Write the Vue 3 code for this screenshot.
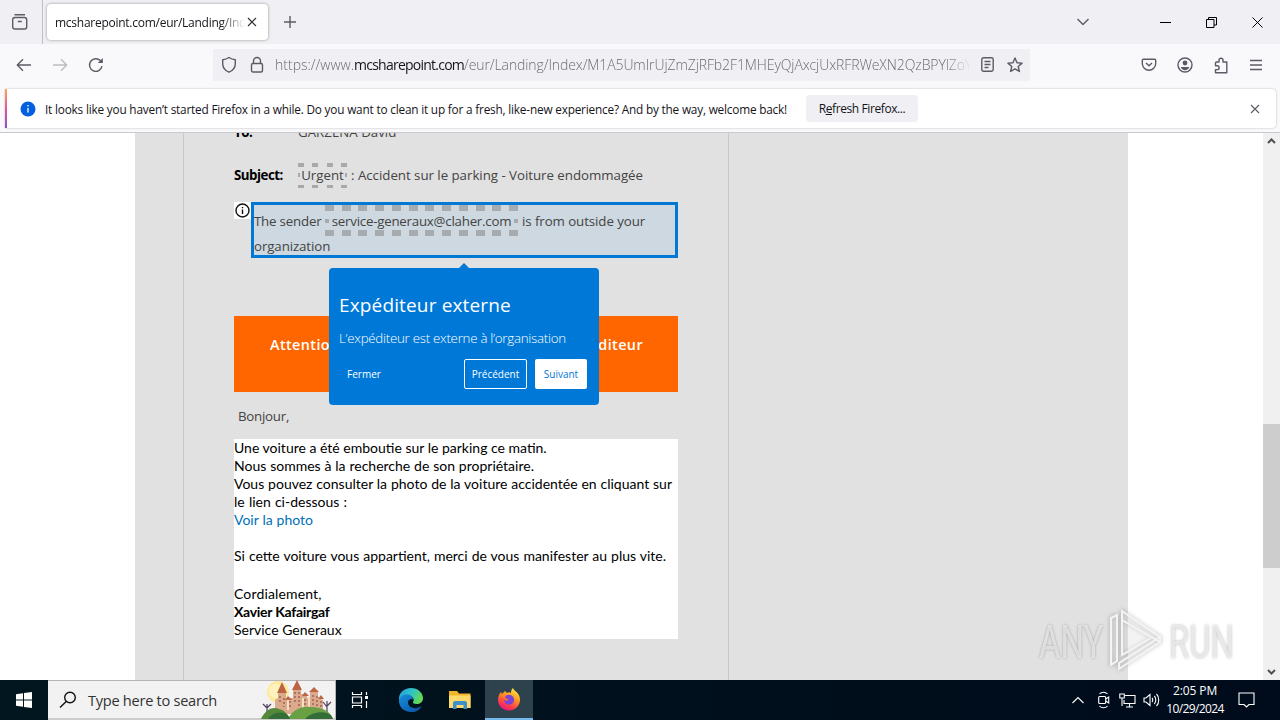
<template>
    <div class="desktop">
        <header class="tabs">
            <div class="overview">
                <svg width="18" height="18" viewBox="0 0 18 18" class="ico"><rect x="1.7" y="4.5" width="14" height="11.5" rx="2.2"/><path d="M3.5 1.7h10.5M6.8 8.5h4"/></svg>
            </div>
            <div class="tab">
                <span class="tab-title">mcsharepoint.com/eur/Landing/Index</span>
                <svg width="10" height="10" viewBox="0 0 10 10" class="ico dark"><path d="M1 1l8 8M9 1l-8 8"/></svg>
            </div>
            <svg class="ico plus" width="14" height="14" viewBox="0 0 14 14"><path d="M7 1v12M1 7h12"/></svg>
            <div class="window-buttons">
                <svg class="ico" width="14" height="8" viewBox="0 0 14 8"><path d="M1.5 1l5.5 5.5L12.5 1"/></svg>
                <svg class="ico black minimize" width="11" height="11" viewBox="0 0 11 11"><path d="M0 5.5h11"/></svg>
                <svg class="ico black" width="11" height="11" viewBox="0 0 11 11"><path d="M.5 2.5h7.5v8H.5zM2.5 2.5v-2h8v7.5H8"/></svg>
                <svg class="ico black" width="11" height="11" viewBox="0 0 11 11"><path d="M.5.5l10 10M10.5.5l-10 10"/></svg>
            </div>
        </header>

        <nav class="toolbar">
            <div class="history">
                <svg class="ico" width="16" height="14" viewBox="0 0 16 14"><path d="M15 7H1.5M7 1.2L1.3 7 7 12.8"/></svg>
                <svg class="ico disabled" width="16" height="14" viewBox="0 0 16 14"><path d="M1 7h13.5M9 1.2L14.7 7 9 12.8"/></svg>
                <svg class="ico" width="16" height="16" viewBox="0 0 16 16"><path d="M14 9.2A6.3 6.3 0 1 1 12.3 3.6L14.2 5.4"/><path d="M14.8 1v5H9.8z" class="solid"/></svg>
            </div>
            <div class="urlbar">
                <svg class="ico" width="16" height="18" viewBox="0 0 16 18"><path d="M8 1.5c2 1.4 4 2 6.3 2.2v4c0 4-2.5 6.8-6.3 8.5C4.2 14.5 1.7 11.7 1.7 7.7v-4C4 3.5 6 2.9 8 1.5z"/></svg>
                <svg class="ico lock" width="14" height="18" viewBox="0 0 14 18"><rect x="1.5" y="7.5" width="11" height="8.5" rx="1.5"/><path d="M3.5 7.5V5a3.5 3.5 0 0 1 7 0v2.5"/></svg>
                <div class="url"><span>https://www.</span><b>mcsharepoint.com</b><span class="path">/eur/Landing/Index/M1A5UmIrUjZmZjRFb2F1MHEyQjAxcjUxRFRWeXN2QzBPYlZoY</span></div>
                <svg class="ico reader" width="13" height="15" viewBox="0 0 13 15"><rect x=".8" y=".8" width="11.4" height="13.4" rx="1.7"/><path d="M3.5 4.5h6M3.5 7.5h6M3.5 10.5h4"/></svg>
                <svg class="ico" width="16" height="16" viewBox="0 0 16 16"><path d="M8 1l2 4.700 5.100.4-3.900 3.400 1.200 5L8 11.800l-4.400 2.700 1.200-5L.9 6.100 6 5.700z"/></svg>
            </div>
            <div class="actions">
                <svg class="ico" width="16" height="16" viewBox="0 0 16 16"><path d="M2.500 2.200h11c.8 0 1.200.5 1.200 1.200V6.500a6.700 6.700 0 0 1-13.400 0V3.400c0-.7.4-1.200 1.200-1.200zM5 6l3 2.800L11 6"/></svg>
                <svg class="ico" width="16" height="16" viewBox="0 0 16 16"><circle cx="8" cy="8" r="7"/><circle cx="8" cy="6" r="2.4" class="solid"/><path d="M3.7 10h8.6c-.6 1.9-2.2 3.2-4.3 3.2S4.3 11.9 3.7 10z" class="solid"/></svg>
                <svg class="ico" width="16" height="17" viewBox="0 0 16 17"><path d="M3.5 5H6V3.2a2 2 0 0 1 4 0V5h3.8v10.8H2.5v-3.2h1.7a1.9 1.9 0 0 0 0-3.8H2.5V6c0-.6.4-1 1-1z"/></svg>
                <svg class="ico" width="14" height="12" viewBox="0 0 14 12"><path d="M1 1.5h12M1 6h12M1 10.5h12"/></svg>
            </div>
        </nav>

        <div class="notice-wrap">
            <div class="notice">
                <svg width="16" height="16" viewBox="0 0 16 16"><circle cx="8" cy="8" r="7.5" fill="#0560df"/><path d="M8 7v4.5M8 4v1.5" stroke="#fff" stroke-width="1.3"/></svg>
                <span class="notice-text">It looks like you haven’t started Firefox in a while. Do you want to clean it up for a fresh, like-new experience? And by the way, welcome back!</span>
                <button class="refresh"><span>R<u>e</u>fresh Firefox...</span></button>
                <svg class="ico notice-close" width="10" height="10" viewBox="0 0 10 10"><path d="M1 1l8 8M9 1l-8 8"/></svg>
            </div>
        </div>

        <main class="viewport">
            <div class="gray">
                <section class="mail">
                    <div class="row to"><b>To:</b><span>GARZENA David</span></div>
                    <div class="row subject"><b>Subject:</b><span class="dashed">Urgent</span><span class="subject-text">: Accident sur le parking - Voiture endommagée</span></div>
                    <div class="sender">
                        <div class="sender-icon"><svg width="15" height="15" viewBox="0 0 15 15"><circle cx="7.5" cy="7.5" r="6.5"/><path d="M7.5 6.5v4.5M7.5 4v1.3"/></svg></div>
                        <div class="sender-box">
                            <div class="sender-line"><span class="s1">The sender</span><span class="address">service-generaux@claher.com</span><span class="s2">is from outside your</span></div>
                            <div class="s3">organization</div>
                        </div>
                        <div class="popover">
                            <h3>Expéditeur externe</h3>
                            <p>L’expéditeur est externe à l’organisation</p>
                            <div class="popover-buttons">
                                <button class="close">Fermer</button>
                                <button class="prev">Précédent</button>
                                <button class="next">Suivant</button>
                            </div>
                        </div>
                    </div>
                    <div class="banner"><span>Attention</span><span>expéditeur</span></div>
                    <div class="hello">Bonjour,</div>
                    <article class="body">
                        <div v-for="(line, i) in lines" :key="i" class="line" :class="line.type"><span :style="{ wordSpacing: (line.words || 0) + 'px' }">{{ line.text }}</span></div>
                    </article>
                </section>
            </div>
            <div class="scrollbar">
                <svg width="17" height="17" viewBox="0 0 17 17"><path d="M5 10l3.5-3.5L12 10"/></svg>
                <div class="thumb"></div>
                <svg width="17" height="17" viewBox="0 0 17 17"><path d="M5 7l3.5 3.5L12 7"/></svg>
            </div>
            <div class="watermark">
                <span>ANY</span>
                <svg width="58" height="66" viewBox="0 0 58 66"><path d="M4 10l6-3v46l-6 4zM15 3l38 26v5L15 12zM15 12v35l29-17M12 61l41-27v-5L12 55z"/></svg>
                <span>RUN</span>
            </div>
        </main>

        <footer class="taskbar">
            <div class="start"><svg width="16" height="16" viewBox="0 0 16 16"><path d="M0 2.3L7 1.3V7.5H0zM8 1.1L16 0v7.5H8zM0 8.5h7v6.2l-7-1zM8 8.5h8V16l-8-1.1z" fill="#fff"/></svg></div>
            <div class="search">
                <svg width="18" height="18" viewBox="0 0 18 18"><circle cx="11" cy="6.5" r="5.3"/><path d="M7.2 10.5L1 16.5"/></svg>
                <span>Type here to search</span>
                <svg class="castle" width="76" height="39" viewBox="0 0 76 39">
                    <circle cx="19" cy="12" r="11" fill="#ffe9a0"/>
                    <circle cx="17" cy="11" r="7" fill="#fff3bd"/>
                    <path d="M16 34V20l3-2v-6h8v6h7V9h8v5h6v4h3v-7h8v6l5 3v14z" fill="#dba98c"/>
                    <path d="M18 13l5-11 5 11zM33 10l5-10 5 10zM50 12l5-5 5 5zM26 20l3-4 4 4zM43 16l3-4 4 4zM59 19l3-4 3 4z" fill="#bd6542"/>
                    <path d="M21 16v8M25 18v9M31 21v8M36 12v12M40 12v14M46 19v8M54 15v13M58 16v11M62 21v6" stroke="#995649" stroke-width="1.3" stroke-dasharray="2 2"/>
                    <path d="M29 20v10M44 18v10M50 17v10" stroke="#f8dfc0" stroke-width="2"/>
                    <path d="M8 34V24M8 28l-4-4M8 28l4-4M68 34V21M68 27l-4-5M68 26l4-4" stroke="#55405f" stroke-width="1.2" fill="none"/>
                    <path d="M2 39c4-8 10-13 18-10 5 1 9 5 11 10z" fill="#54893c"/>
                    <path d="M29 39c4-8 12-13 23-12 12 0 20 5 22 12z" fill="#6aa044"/>
                    <path d="M9 39c2-4 9-8 16-6 3 1 5 3 6 6zM46 39c5-6 15-8 22-6 3 1 5 3 6 6z" fill="#346d37"/>
                </svg>
            </div>
            <div class="app first"><svg class="taskview" width="18" height="16" viewBox="0 0 18 16"><path d="M1.5 0v2.5h9V0M1.5 16v-2.5h9V16M1.5 5h9v6h-9zM15.5 0v3M15.5 9v7"/><path d="M14 4h3v3h-3z" class="knob"/></svg></div>
            <div class="app edge">
                <svg width="26" height="26" viewBox="0 0 26 26">
                    <defs>
                        <linearGradient id="edgeTop" x1="0" y1="0" x2="1" y2="0.4"><stop offset="0" stop-color="#249bdc"/><stop offset=".55" stop-color="#2fc3c7"/><stop offset="1" stop-color="#62d957"/></linearGradient>
                        <linearGradient id="edgeLow" x1="0" y1="0" x2="1" y2="1"><stop offset="0" stop-color="#1590df"/><stop offset="1" stop-color="#0c4fa0"/></linearGradient>
                    </defs>
                    <path d="M1 14C0 6 6 1 13 1s12 5 12 10c0 4-3 6-6.500 6-2.500 0-4-1-3.500-2 2-3-.5-6-4-6-5 0-9 2-10 5z" fill="url(#edgeTop)"/>
                    <path d="M1 13c1-4 5-6 9-5.500 3 .3 5 2.500 5 5-2-1.500-5 0-5 3 0 4 5 6.500 9 5.500 2-.4 3.500-1.300 4.500-2C22 23 17.500 25.500 13 25 6 25 .5 20 1 13z" fill="url(#edgeLow)"/>
                </svg>
            </div>
            <div class="app">
                <svg width="22" height="18" viewBox="0 0 22 18"><path d="M0 0h8l2 2.5h11.5V17H0z" fill="#f3b32a"/><path d="M0 4.5h21.5V17H0z" fill="#ffda6b"/><path d="M4 18v-6.5l1.5-1.5h11l1.5 1.5V18h-3.5v-4h-7v4z" fill="#3f8fcb"/></svg>
            </div>
            <div class="app active">
                <svg width="24" height="24" viewBox="0 0 24 24">
                    <defs><linearGradient id="fox" x1=".8" y1="0" x2=".3" y2="1"><stop offset="0" stop-color="#fff04a"/><stop offset=".4" stop-color="#ff9a20"/><stop offset=".75" stop-color="#ff3c47"/><stop offset="1" stop-color="#e31587"/></linearGradient></defs>
                    <path d="M1 13c0-3 1-6 3-8l1 2 3-3 2 2c1-1 3-1 4 0 0-2 .5-4 2-5 .5 3 6.500 4 7 11 .3 6-4 11.500-11 11.500C6 23.500 1 19 1 13z" fill="url(#fox)"/>
                    <path d="M8 10c1-2 3-2.500 5-2 3 .5 4.500 3 4 6-.5 2.500-3 4-5.500 3.700C8.500 17.500 7 15 7 13c1.500 1 3.500 1 5-.5-2 0-3-1-4-2.500z" fill="#7a45d6"/>
                </svg>
            </div>
            <div class="tray">
                <svg class="chevron" width="12" height="8" viewBox="0 0 12 8"><path d="M.5 7L6 1.5 11.5 7"/></svg>
                <svg class="camera" width="12" height="18" viewBox="0 0 12 18"><rect x=".7" y="5.5" width="7" height="7" rx="1"/><path d="M7.7 8l3-2v6l-3-2M1.5 3c2-2.300 6-2.300 8 0M1.500 15c2 2.300 6 2.300 8 0"/></svg>
                <svg class="network" width="17" height="15" viewBox="0 0 17 15"><path d="M6 2.5h10v8H5V7M10.5 10.5v3M7 14h7M.8 1h4.5v4H.8zM3 5v8"/></svg>
                <svg class="volume" width="17" height="14" viewBox="0 0 17 14"><path d="M1 5h2l4-3.5v11L3 9H1zM9 5c1 1 1 3 0 4M11.3 3c2 2 2 6 0 8M13.5 1c3 3 3 9 0 12"/></svg>
                <div class="clock"><span>2:05 PM</span><span class="date">10/29/2024</span></div>
                <svg width="17" height="16" viewBox="0 0 17 16"><path d="M1 1h15v11.5h-5L8.5 15 6 12.5H1z"/></svg>
            </div>
        </footer>
    </div>
</template>
<script setup>
// words: extra space between words, keeps the ti/tt ligatures
const lines = [
    { text: 'Une voiture a été emboutie sur le parking ce matin.' },
    { text: 'Nous sommes à la recherche de son propriétaire.', words: .28 },
    { text: 'Vous pouvez consulter la photo de la voiture accidentée en cliquant sur', words: .28 },
    { text: 'le lien ci-dessous :', words: .6 },
    { text: 'Voir la photo', words: .3, type: 'link' },
    { text: '' },
    { text: 'Si cette voiture vous appartient, merci de vous manifester au plus vite.', words: .42 },
    { text: '', type: 'spacer' },
    { text: 'Cordialement,', type: 'wide' },
    { text: 'Xavier Kafairgaf', type: 'bold' },
    { text: 'Service Generaux' },
];
</script>
<style>
body {
    margin: 0;
    overflow: hidden;
}
</style>
<style scoped>
* {
    box-sizing: border-box;
}
.desktop {
    width: 1280px;
    height: 720px;
    display: flex;
    flex-direction: column;
    font-family: "Open Sans", "Noto Sans", sans-serif;
    font-size: 12px;
    white-space: nowrap;
    overflow: hidden;
    color: #15141a;
}
svg {
    display: block;
    flex: none;
}
button {
    font: inherit;
    padding: 0;
    border: 0;
}
.ico {
    fill: none;
    stroke: #5b5b66;
    stroke-width: 1.4;
    stroke-linejoin: round;
}
.ico .solid {
    fill: #5b5b66;
    stroke: none;
}
.ico.dark {
    stroke: #333;
    stroke-width: 1.2;
}
.ico.black {
    stroke: #000;
    stroke-width: 1;
    stroke-linejoin: miter;
}
.ico.disabled {
    stroke: #bcbcc2;
}
.tabs {
    height: 44px;
    flex: none;
    display: flex;
    align-items: center;
    background: #f0f0f4;
}
.overview {
    width: 43px;
    height: 44px;
    padding: 13px 0 0 11px;
    border-right: 1px solid #bfbfc4;
}
.tab {
    width: 221px;
    height: 36px;
    margin-left: 4px;
    padding: 0 11px 0 8px;
    display: flex;
    align-items: center;
    justify-content: space-between;
    background: #fff;
    border-radius: 4px;
    box-shadow: 0 0 3px rgba(0, 0, 0, .4);
}
.tab-title {
    width: 190px;
    overflow: hidden;
    letter-spacing: -.26px;
    mask-image: linear-gradient(to right, #000 165px, transparent 190px);
}
.plus {
    margin-left: 15px;
}
.window-buttons {
    display: flex;
    align-items: center;
    gap: 35px;
    margin: 0 17px 0 auto;
}
.minimize {
    margin-left: 35px;
}
.toolbar {
    height: 42px;
    flex: none;
    display: flex;
    align-items: center;
    background: #f9f9fb;
}
.history {
    width: 213px;
    padding-left: 16px;
    display: flex;
    align-items: center;
    gap: 20px;
}
.urlbar {
    width: 817px;
    height: 32px;
    margin-top: -1px;
    padding-left: 8px;
    display: flex;
    align-items: center;
    background: #f0f0f4;
}
.lock {
    margin-left: 13px;
}
.url {
    width: 696px;
    margin-left: 11px;
    overflow: hidden;
    font-size: 14px;
    font-weight: 300;
    color: #6b6b73;
    mask-image: linear-gradient(to right, #000 670px, transparent 696px);
}
.url b {
    font-weight: 400;
    letter-spacing: -.76px;
    color: #15141a;
}
.path {
    letter-spacing: -.1px;
}
.reader {
    margin: 0 13px 0 10px;
}
.actions {
    display: flex;
    align-items: center;
    gap: 20px;
    margin: 0 17px 0 auto;
}
.notice-wrap {
    height: 47px;
    flex: none;
    padding: 3px 4px 5px 5px;
    background: #f9f9fb;
    border-bottom: 1px solid #c9c9cb;
}
.notice {
    position: relative;
    height: 39px;
    padding-left: 15px;
    display: flex;
    align-items: center;
    background: #fff;
    border-radius: 0 4px 4px 0;
    box-shadow: 0 0 2px rgba(0, 0, 0, .3);
}
.notice::before {
    content: "";
    position: absolute;
    left: 0;
    top: 0;
    width: 2px;
    height: 39px;
    background: linear-gradient(#ffa45c, #e3559b, #8a4fc8);
}
.notice-text {
    width: 743px;
    margin-left: 9px;
    font-size: 11.8px;
    letter-spacing: -.19px;
}
.refresh {
    width: 112px;
    height: 27px;
    margin-left: 18px;
    background: #f0f0f4;
    border-radius: 4px;
    letter-spacing: -.4px;
    color: #15141a;
}
.notice-close {
    margin: 0 16px 0 auto;
    stroke-width: 1.1;
}
.viewport {
    position: relative;
    height: 547px;
    flex: none;
    display: flex;
    justify-content: space-between;
    padding-left: 135px;
    background: #fff;
    overflow: hidden;
}
.gray {
    width: 993px;
    padding-left: 48px;
    background: #e1e1e1;
}
.mail {
    display: flow-root;
    width: 546px;
    height: 547px;
    padding: 0 50px;
    border-left: 1px solid #c8c8c8;
    border-right: 1px solid #c8c8c8;
    color: #444;
}
.row {
    display: flex;
    align-items: center;
    font-size: 13.3px;
}
.row b {
    width: 64px;
    letter-spacing: -.5px;
    color: #000;
}
.to {
    height: 18px;
    margin-top: -10px;
}
.subject {
    height: 26px;
    margin-top: 21px;
}
/* sparse dashes, with one dot halfway down each side */
.dashed {
    width: 49px;
    height: 25px;
    line-height: 25px;
    text-align: center;
    background:
        repeating-linear-gradient(90deg, #a9a9a9 0 6px, transparent 6px 14.33px) top / 100% 4px no-repeat,
        repeating-linear-gradient(90deg, #a9a9a9 0 6px, transparent 6px 14.33px) bottom / 100% 3px no-repeat,
        linear-gradient(#a9a9a9, #a9a9a9) left / 2px 4px no-repeat,
        linear-gradient(#a9a9a9, #a9a9a9) right / 2px 4px no-repeat;
}
.subject-text {
    margin-left: 4px;
    letter-spacing: -.03px;
}
.sender {
    position: relative;
    height: 56px;
    margin-top: 14px;
    display: flex;
}
.sender-icon {
    width: 17px;
    height: 17px;
    padding: 1px;
    background: #fff;
}
.sender-icon svg {
    fill: none;
    stroke: #111;
    stroke-width: 1.4;
}
.sender-box {
    width: 427px;
    height: 56px;
    border: 3px solid #0078d4;
    background: #cdd8e0;
    font-size: 13.3px;
}
.sender-line {
    height: 31px;
    line-height: 33px;
    display: flex;
}
.s1 {
    width: 71px;
    letter-spacing: -.2px;
}
.address {
    width: 193px;
    height: 31px;
    letter-spacing: -.23px;
    text-align: center;
    background:
        repeating-linear-gradient(90deg, #a6abb0 0 9px, transparent 9px 16.73px) top / 100% 6px no-repeat,
        repeating-linear-gradient(90deg, #a6abb0 0 9px, transparent 9px 16.73px) bottom / 100% 6px no-repeat,
        linear-gradient(#a6abb0, #a6abb0) left / 4px 4px no-repeat,
        linear-gradient(#a6abb0, #a6abb0) right / 4px 4px no-repeat;
}
.s2 {
    margin-left: 4px;
    letter-spacing: -.08px;
}
.s3 {
    line-height: 20px;
    letter-spacing: -.1px;
}
.popover {
    position: absolute;
    z-index: 2;
    left: 95px;
    top: 66px;
    width: 270px;
    height: 137px;
    padding: 23px 12px 0 10px;
    border-radius: 4px;
    background: #0078d7;
    color: #fff;
}
.popover::before {
    content: "";
    position: absolute;
    left: 130px;
    top: -5px;
    border: 5px solid transparent;
    border-top: 0;
    border-bottom-color: #0078d7;
}
.popover h3 {
    margin: 0;
    font-size: 19px;
    line-height: 28px;
    font-weight: 500;
    letter-spacing: .15px;
}
.popover p {
    margin: 9px 0 10px;
    font-size: 13.3px;
    line-height: 21px;
    font-weight: 300;
    letter-spacing: -.26px;
}
.popover-buttons {
    display: flex;
    gap: 8px;
    font-size: 10px;
    letter-spacing: -.2px;
}
.popover-buttons button {
    height: 30px;
    border-radius: 2px;
    background: transparent;
    color: #fff;
}
.popover-buttons .close {
    width: 50px;
    margin-right: auto;
}
.popover-buttons .prev {
    width: 63px;
    border: 1px solid #fff;
}
.popover-buttons .next {
    width: 52px;
    background: #fff;
    color: #0078d7;
}
.banner {
    width: 444px;
    height: 76px;
    margin-top: 58px;
    padding: 18px 35px 0 36px;
    display: flex;
    justify-content: space-between;
    background: #f60;
    color: #fff;
    font-size: 14.4px;
    line-height: 21px;
    font-weight: 600;
    letter-spacing: .4px;
}
.hello {
    height: 47px;
    padding: 15px 0 0 4px;
    font-size: 13.3px;
    line-height: 19px;
    letter-spacing: -.25px;
}
.body {
    width: 444px;
    height: 200px;
    background: #fff;
    color: #000;
    font-family: Lato, "Open Sans", sans-serif;
    font-size: 14px;
}
.line {
    height: 18px;
    line-height: 18px;
}
.spacer {
    height: 20px;
}
.link {
    color: #0070b8;
}
.wide {
    letter-spacing: .15px;
}
.bold {
    font-weight: 700;
    letter-spacing: -.26px;
}
.scrollbar {
    width: 17px;
    height: 547px;
    display: flex;
    flex-direction: column;
    background: #f0f0f0;
}
.scrollbar svg {
    fill: none;
    stroke: #505050;
    stroke-width: 2;
}
.thumb {
    height: 144px;
    margin: 274px 0 auto;
    background: #cdcdcd;
}
.watermark {
    position: absolute;
    left: 1039px;
    top: 474px;
    width: 194px;
    height: 68px;
    display: flex;
    align-items: center;
    justify-content: space-between;
    color: rgba(255, 255, 255, .6);
    font: 47px "Roboto", sans-serif;
    text-shadow: 0 0 3px rgba(0, 0, 0, .3);
}
.watermark span {
    width: 64px;
    transform: scaleX(.7);
    transform-origin: left;
}
.watermark svg {
    fill: rgba(255, 255, 255, .2);
    stroke: #f4f4f4;
    stroke-width: 2;
    filter: drop-shadow(0 0 2px rgba(0, 0, 0, .3));
}
.taskbar {
    height: 40px;
    flex: none;
    display: flex;
    background: linear-gradient(90deg, #02161f, #000f1c 60%, #000b1c);
}
.start {
    width: 48px;
    padding: 12px 16px;
}
.search {
    width: 288px;
    height: 40px;
    display: flex;
    align-items: center;
    padding-left: 11px;
    background: #f2f2f2;
    border: 1px solid #b4b4b4;
    border-left: 0;
    border-bottom: 2px solid #ccc;
    font-size: 14.6px;
    letter-spacing: -.28px;
    color: #333;
}
.search > svg:first-child {
    fill: none;
    stroke: #111;
    stroke-width: 1.4;
}
.search span {
    width: 164px;
    margin-left: 11px;
}
.castle {
    margin-left: 8px;
}
.app {
    width: 50px;
    display: flex;
    align-items: center;
    justify-content: center;
}
.app.first {
    width: 49px;
    padding-right: 2px;
}
.app.edge {
    padding-left: 2px;
}
.taskview {
    fill: none;
    stroke: #fff;
    stroke-width: 1.2;
}
.taskview .knob {
    fill: #fff;
    stroke: none;
}
.app.active {
    width: 48px;
    background: #2d424c;
    border-bottom: 2px solid #76b9ed;
}
.tray {
    margin-left: auto;
    padding-right: 25px;
    display: flex;
    align-items: center;
    color: #fff;
}
.tray svg {
    fill: none;
    stroke: #fff;
    stroke-width: 1.1;
}
.tray .chevron {
    margin-right: 14px;
}
.tray .camera {
    margin-right: 9px;
}
.tray .network {
    margin-right: 7px;
}
.tray .volume {
    margin-right: 5px;
}
.clock {
    width: 60px;
    margin-right: 13px;
    display: flex;
    flex-direction: column;
    align-items: center;
    line-height: 18px;
    letter-spacing: -.1px;
}
.date {
    letter-spacing: -.6px;
}
</style>
